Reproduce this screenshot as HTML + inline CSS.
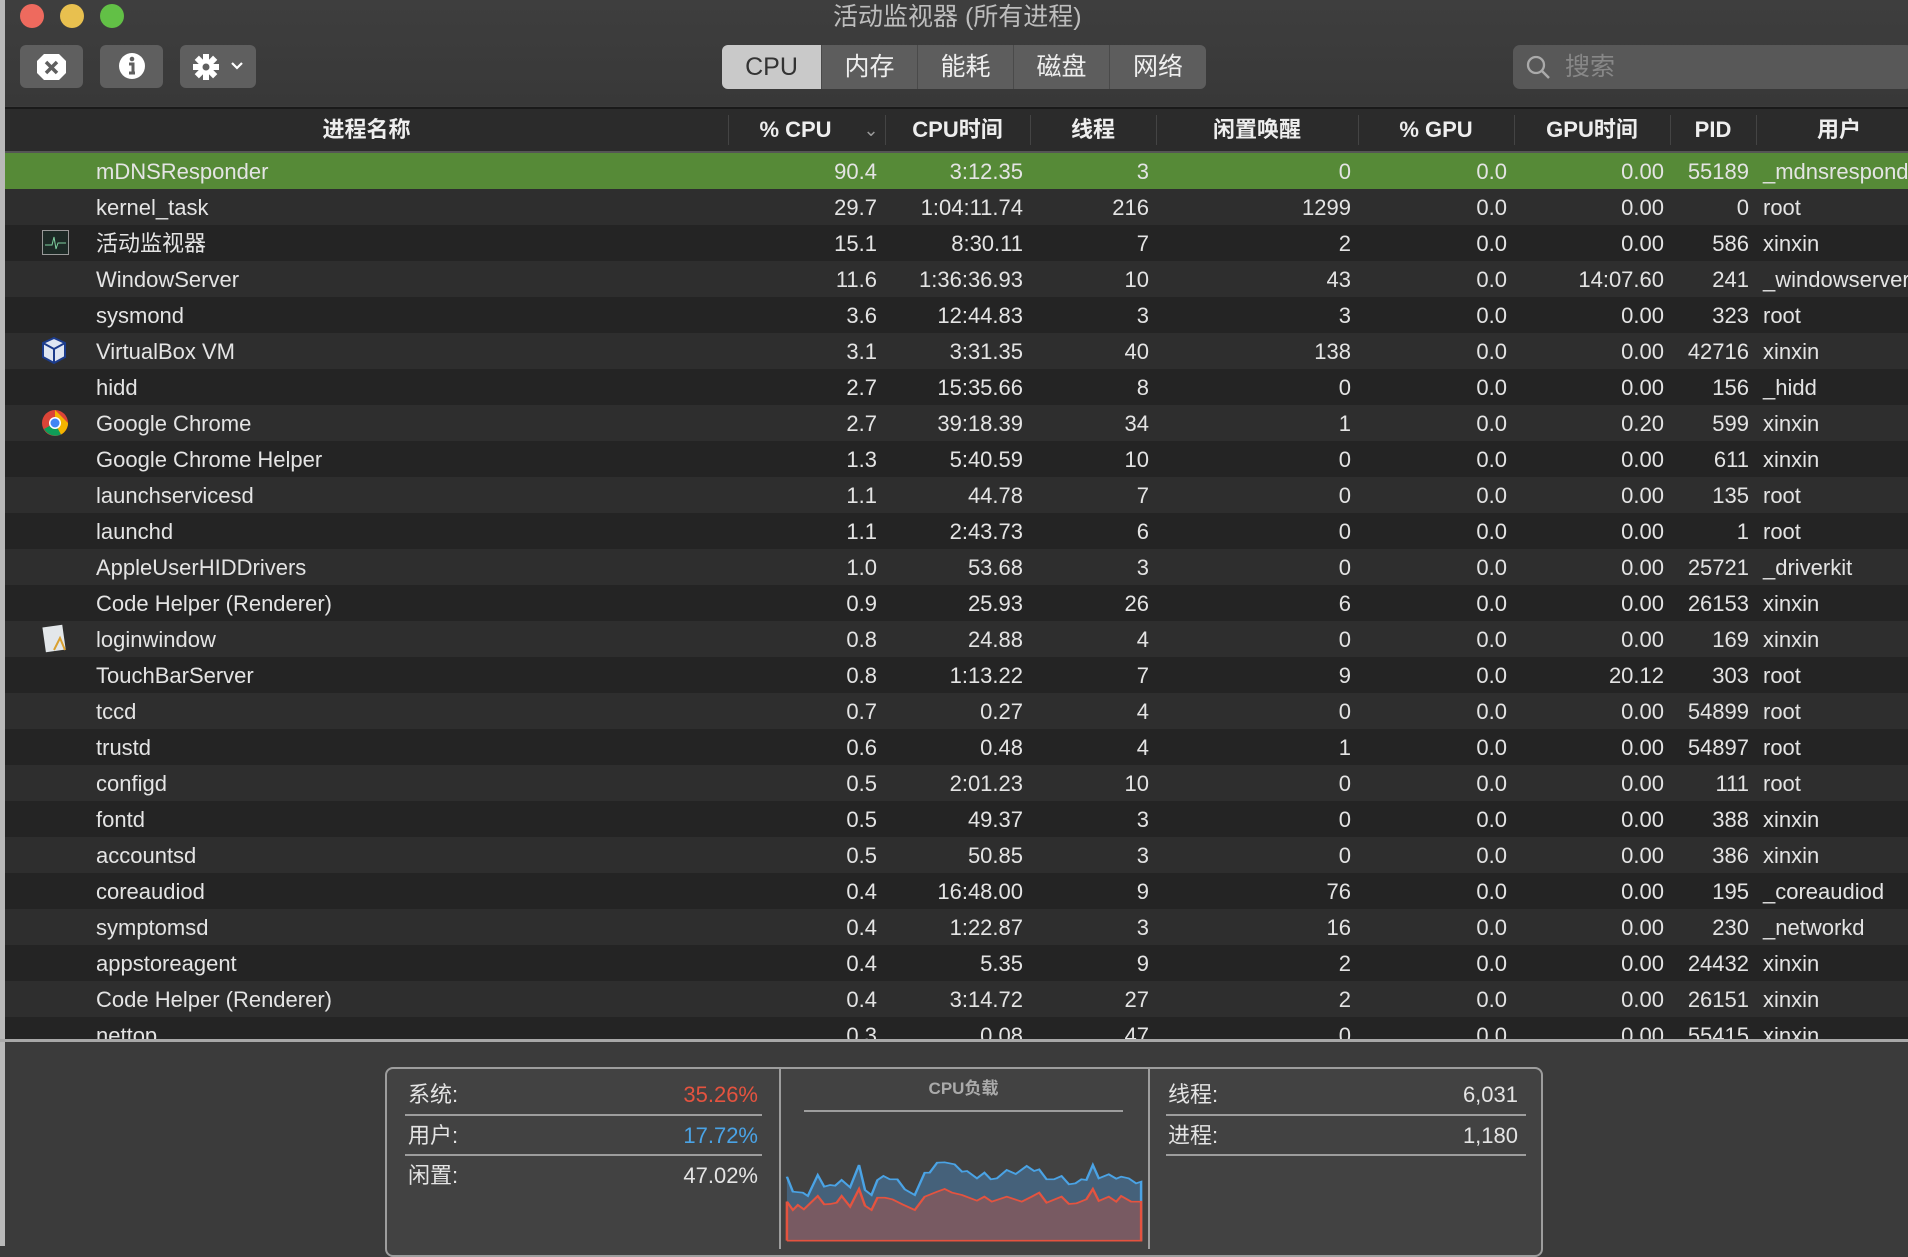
<!DOCTYPE html>
<html><head><meta charset="utf-8"><style>
*{margin:0;padding:0;box-sizing:border-box}
body{width:1908px;height:1246px;overflow:hidden;background:#3b3b3b;font-family:"Liberation Sans","Noto Sans CJK SC",sans-serif;color:#e4e4e4;position:relative}
.abs{position:absolute}
.strip{left:0;top:0;width:5px;height:1246px;background:#b9b9b9}
.tl{width:24px;height:24px;border-radius:50%;top:4px}
.btn{background:#5f5f5f;border-radius:6px;top:45px;height:43px}
.seg{top:45px;height:44px;background:#5d5d5d;color:#eee;font-size:25px;text-align:center;line-height:44px;border-right:1px solid #4a4a4a}
.hdr{left:5px;top:107px;width:1903px;height:46px;background:#2b2b2b;border-top:2px solid #1a1a1a;border-bottom:2px solid #555}
.hl{position:absolute;top:0;height:42px;line-height:42px;font-size:22px;font-weight:bold;color:#eee;text-align:center}
.sep{position:absolute;top:6px;width:1px;height:30px;background:#444}
.row{position:absolute;left:0;width:1903px;height:36px;font-size:22px;line-height:37px;white-space:nowrap}
.row span{position:absolute;top:0}
.r{text-align:right}
</style></head><body>
<div class="abs strip"></div>
<div class="abs" style="left:5px;top:0;width:1903px;height:106px;background:linear-gradient(#3e3e3e,#383838)"></div>
<div class="abs tl" style="left:20px;background:#ee6a5e"></div>
<div class="abs tl" style="left:60px;background:#e8c04f"></div>
<div class="abs tl" style="left:100px;background:#62c046"></div>
<div class="abs" style="left:833px;top:0;font-size:25px;color:#bdbdbd;line-height:34px">活动监视器 (所有进程)</div>
<div class="abs btn" style="left:20px;width:63px"><svg width="63" height="43"><polygon points="24,9 39,9 46,16 46,28 39,35 24,35 17,28 17,16" fill="#fff"/><path d="M26 17 L37 28 M37 17 L26 28" stroke="#5f5f5f" stroke-width="3.5"/></svg></div>
<div class="abs btn" style="left:100px;width:63px"><svg width="63" height="43"><circle cx="32" cy="21" r="13" fill="#fff"/><circle cx="32" cy="14" r="2.3" fill="#5f5f5f"/><path d="M29 19h4v9h2M29 28h6" stroke="#5f5f5f" stroke-width="3" fill="none"/></svg></div>
<div class="abs btn" style="left:180px;width:76px"><svg width="76" height="43"><g transform="translate(26,22)" fill="#fff"><circle r="8"/><rect x="-3" y="-13" width="6" height="26"/><rect x="-3" y="-13" width="6" height="26" transform="rotate(45)"/><rect x="-3" y="-13" width="6" height="26" transform="rotate(90)"/><rect x="-3" y="-13" width="6" height="26" transform="rotate(135)"/><circle r="3.5" fill="#5f5f5f"/></g><path d="M52 18l5 5 5-5" stroke="#fff" stroke-width="2.2" fill="none"/></svg></div>
<div class="abs" style="left:722px;top:45px;width:484px;height:44px;border-radius:6px;overflow:hidden">
<div class="abs seg" style="left:0;width:100px;top:0;background:#c9c9c9;color:#333">CPU</div>
<div class="abs seg" style="left:100px;width:96px;top:0">内存</div>
<div class="abs seg" style="left:196px;width:96px;top:0">能耗</div>
<div class="abs seg" style="left:292px;width:96px;top:0">磁盘</div>
<div class="abs seg" style="left:388px;width:96px;top:0;border-right:0">网络</div>
</div>
<div class="abs" style="left:1513px;top:45px;width:400px;height:44px;border-radius:7px;background:#585858"><svg class="abs" style="left:12px;top:9px" width="28" height="28"><circle cx="11" cy="11" r="8" stroke="#aaa" stroke-width="2.3" fill="none"/><path d="M17 17l7 7" stroke="#aaa" stroke-width="2.5"/></svg><span class="abs" style="left:52px;top:0;line-height:44px;font-size:25px;color:#888">搜索</span></div>
<div class="abs hdr">
<div class="hl" style="left:0;width:723px">进程名称</div>
<div class="sep" style="left:723px"></div>
<div class="hl" style="left:723px;width:135px">% CPU</div><div class="hl" style="left:856px;width:20px;font-weight:normal;color:#999;font-size:18px">⌄</div>
<div class="sep" style="left:880px"></div>
<div class="hl" style="left:880px;width:145px">CPU时间</div>
<div class="sep" style="left:1025px"></div>
<div class="hl" style="left:1025px;width:126px">线程</div>
<div class="sep" style="left:1151px"></div>
<div class="hl" style="left:1151px;width:202px">闲置唤醒</div>
<div class="sep" style="left:1353px"></div>
<div class="hl" style="left:1353px;width:156px">% GPU</div>
<div class="sep" style="left:1509px"></div>
<div class="hl" style="left:1509px;width:156px">GPU时间</div>
<div class="sep" style="left:1665px"></div>
<div class="hl" style="left:1665px;width:86px">PID</div>
<div class="sep" style="left:1751px"></div>
<div class="hl" style="left:1751px;width:166px">用户</div>
</div>
<div class="abs" style="left:5px;top:153px;width:1903px;height:887px;overflow:hidden" id="tb"></div>
<div class="abs" style="left:0;top:1039px;width:1908px;height:3px;background:#a8a8a8"></div>
<div class="abs" style="left:5px;top:1042px;width:1903px;height:204px;background:#3b3b3b"></div>
<div class="abs" style="left:385px;top:1067px;width:1158px;height:190px;border:2px solid #9d9d9d;border-radius:8px;background:#424242"></div>
<div class="abs" style="left:779px;top:1069px;width:2px;height:180px;background:#9d9d9d"></div>
<div class="abs" style="left:1148px;top:1069px;width:2px;height:180px;background:#9d9d9d"></div>
<div class="abs" style="left:405px;top:1114px;width:357px;height:2px;background:#9d9d9d"></div>
<div class="abs" style="left:405px;top:1154px;width:357px;height:2px;background:#9d9d9d"></div>
<div class="abs" style="left:1166px;top:1114px;width:360px;height:2px;background:#9d9d9d"></div>
<div class="abs" style="left:1166px;top:1154px;width:360px;height:2px;background:#9d9d9d"></div>
<div class="abs" style="left:804px;top:1110px;width:319px;height:2px;background:#9d9d9d"></div>
<div class="abs" style="left:408px;top:1080px;font-size:22px;line-height:30px">系统:</div><div class="abs r" style="left:600px;width:158px;top:1080px;font-size:22px;line-height:30px;color:#e5533f">35.26%</div>
<div class="abs" style="left:408px;top:1121px;font-size:22px;line-height:30px">用户:</div><div class="abs r" style="left:600px;width:158px;top:1121px;font-size:22px;line-height:30px;color:#4aa3e5">17.72%</div>
<div class="abs" style="left:408px;top:1161px;font-size:22px;line-height:30px">闲置:</div><div class="abs r" style="left:600px;width:158px;top:1161px;font-size:22px;line-height:30px">47.02%</div>
<div class="abs" style="left:1168px;top:1080px;font-size:22px;line-height:30px">线程:</div><div class="abs r" style="left:1360px;width:158px;top:1080px;font-size:22px;line-height:30px">6,031</div>
<div class="abs" style="left:1168px;top:1121px;font-size:22px;line-height:30px">进程:</div><div class="abs r" style="left:1360px;width:158px;top:1121px;font-size:22px;line-height:30px">1,180</div>
<div class="abs" style="left:804px;width:319px;text-align:center;top:1077px;font-size:17px;font-weight:bold;color:#aaa;line-height:24px">CPU负载</div>
<svg class="abs" style="left:380px;top:1040px" width="780" height="206" viewBox="0 0 1568 618" preserveAspectRatio="none">
<polygon fill="#45617a" points="818,602 818,410 830,455 850,458 860,468 880,405 893,440 905,435 915,437 928,420 945,442 963,375 975,450 988,465 1000,420 1012,408 1025,418 1040,418 1055,448 1075,465 1095,398 1105,398 1120,368 1135,367 1155,373 1170,395 1180,393 1200,415 1215,398 1228,418 1240,415 1260,390 1278,402 1300,378 1315,393 1325,388 1340,418 1355,418 1370,408 1385,433 1398,430 1410,418 1420,420 1433,375 1445,415 1465,403 1480,416 1490,410 1505,415 1520,430 1530,425 1530,602"/>
<polyline fill="none" stroke="#4aa3e5" stroke-width="5" points="818,410 830,455 850,458 860,468 880,405 893,440 905,435 915,437 928,420 945,442 963,375 975,450 988,465 1000,420 1012,408 1025,418 1040,418 1055,448 1075,465 1095,398 1105,398 1120,368 1135,367 1155,373 1170,395 1180,393 1200,415 1215,398 1228,418 1240,415 1260,390 1278,402 1300,378 1315,393 1325,388 1340,418 1355,418 1370,408 1385,433 1398,430 1410,418 1420,420 1433,375 1445,415 1465,403 1480,416 1490,410 1505,415 1520,430 1530,425 1530,602"/>
<polygon fill="#785a62" points="818,602 818,485 830,510 840,495 852,508 880,468 893,493 905,492 918,488 928,468 945,500 963,447 975,497 988,510 1000,473 1015,473 1030,478 1050,493 1075,510 1095,470 1120,455 1135,447 1150,458 1170,465 1200,482 1215,470 1230,485 1260,470 1290,485 1310,470 1325,458 1340,488 1370,470 1385,492 1400,490 1420,478 1433,447 1445,483 1465,470 1480,485 1490,468 1510,485 1530,485 1530,602"/>
<polyline fill="none" stroke="#e5533f" stroke-width="5" points="818,602 818,485 830,510 840,495 852,508 880,468 893,493 905,492 918,488 928,468 945,500 963,447 975,497 988,510 1000,473 1015,473 1030,478 1050,493 1075,510 1095,470 1120,455 1135,447 1150,458 1170,465 1200,482 1215,470 1230,485 1260,470 1290,485 1310,470 1325,458 1340,488 1370,470 1385,492 1400,490 1420,478 1433,447 1445,483 1465,470 1480,485 1490,468 1510,485 1530,485 1530,602 818,602"/>
</svg>
<script>
var d=[["mDNSResponder","90.4","3:12.35","3","0","0.0","0.00","55189","_mdnsresponder"],
["kernel_task","29.7","1:04:11.74","216","1299","0.0","0.00","0","root"],
["活动监视器","15.1","8:30.11","7","2","0.0","0.00","586","xinxin"],
["WindowServer","11.6","1:36:36.93","10","43","0.0","14:07.60","241","_windowserver"],
["sysmond","3.6","12:44.83","3","3","0.0","0.00","323","root"],
["VirtualBox VM","3.1","3:31.35","40","138","0.0","0.00","42716","xinxin"],
["hidd","2.7","15:35.66","8","0","0.0","0.00","156","_hidd"],
["Google Chrome","2.7","39:18.39","34","1","0.0","0.20","599","xinxin"],
["Google Chrome Helper","1.3","5:40.59","10","0","0.0","0.00","611","xinxin"],
["launchservicesd","1.1","44.78","7","0","0.0","0.00","135","root"],
["launchd","1.1","2:43.73","6","0","0.0","0.00","1","root"],
["AppleUserHIDDrivers","1.0","53.68","3","0","0.0","0.00","25721","_driverkit"],
["Code Helper (Renderer)","0.9","25.93","26","6","0.0","0.00","26153","xinxin"],
["loginwindow","0.8","24.88","4","0","0.0","0.00","169","xinxin"],
["TouchBarServer","0.8","1:13.22","7","9","0.0","20.12","303","root"],
["tccd","0.7","0.27","4","0","0.0","0.00","54899","root"],
["trustd","0.6","0.48","4","1","0.0","0.00","54897","root"],
["configd","0.5","2:01.23","10","0","0.0","0.00","111","root"],
["fontd","0.5","49.37","3","0","0.0","0.00","388","xinxin"],
["accountsd","0.5","50.85","3","0","0.0","0.00","386","xinxin"],
["coreaudiod","0.4","16:48.00","9","76","0.0","0.00","195","_coreaudiod"],
["symptomsd","0.4","1:22.87","3","16","0.0","0.00","230","_networkd"],
["appstoreagent","0.4","5.35","9","2","0.0","0.00","24432","xinxin"],
["Code Helper (Renderer)","0.4","3:14.72","27","2","0.0","0.00","26151","xinxin"],
["nettop","0.3","0.08","47","0","0.0","0.00","55415","xinxin"]];
var R=[872,1018,1144,1346,1502,1659,1744];
var icons={2:'<svg width="27" height="25"><rect x="0.5" y="0.5" width="26" height="24" fill="#1d2a26" stroke="#999"/><path d="M3 15h7l2-8 2 12 2-6h8" stroke="#7fd0a0" fill="none"/></svg>',
5:'<svg width="28" height="30"><polygon points="14,2 25,7 25,21 14,27 3,21 3,7" fill="#dfe6f2" stroke="#1c3c8c" stroke-width="2"/><path d="M3 7l11 6 11-6M14 13v14" stroke="#1c3c8c" stroke-width="2" fill="none"/></svg>',
7:'<svg width="30" height="30"><circle cx="15" cy="15" r="13" fill="#db4437"/><path d="M15 15 L4 21 A13 13 0 0 0 21 26.5Z" fill="#0f9d58"/><path d="M15 15 L21 26.5 A13 13 0 0 0 28 15 L15 2Z" fill="#f4b400"/><circle cx="15" cy="15" r="6" fill="#fff"/><circle cx="15" cy="15" r="4.5" fill="#4285f4"/></svg>',
13:'<svg width="30" height="30"><rect x="4" y="2" width="20" height="25" fill="#e3e7ea" transform="rotate(-8 14 14)"/><path d="M14 26l6-12 5 12" stroke="#d9a030" stroke-width="2" fill="none"/></svg>'};
var h='';
for(var i=0;i<d.length;i++){var r=d[i];var bg=i==0?'#568a37':(i%2?'#2e2e2e':'#242424');
h+='<div class="row" style="top:'+(i*36)+'px;background:'+bg+'">';
if(icons[i])h+='<span style="left:'+(i==2?37:35)+'px;top:'+(i==2?5:3)+'px;line-height:0">'+icons[i]+'</span>';
h+='<span style="left:91px">'+r[0]+'</span>';
for(var j=0;j<7;j++)h+='<span class="r" style="left:'+(R[j]-200)+'px;width:200px">'+r[j+1]+'</span>';
h+='<span style="left:1758px">'+r[8]+'</span></div>';}
document.getElementById('tb').innerHTML=h;
</script>
</body></html>
